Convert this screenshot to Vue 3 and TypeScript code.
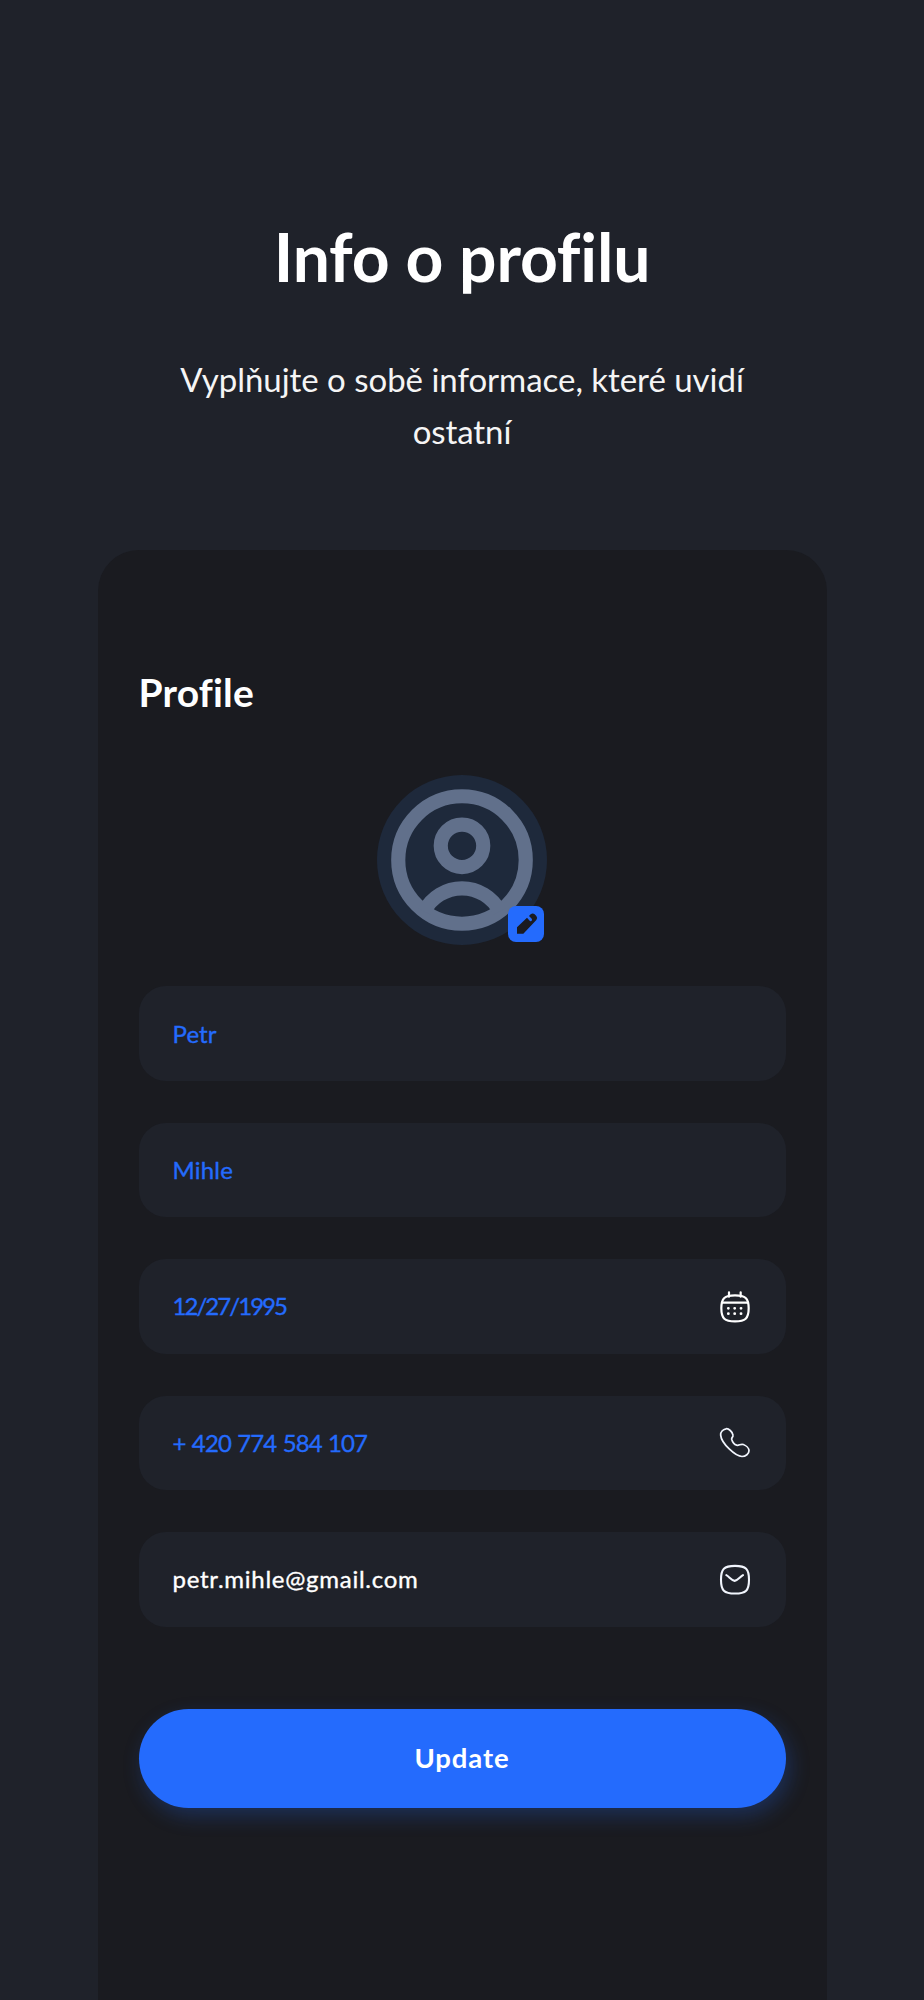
<script setup lang="ts">
interface Field {
  id: string
  value: string
  locked?: boolean
  icon?: 'calendar' | 'phone' | 'mail'
}

const fields: Field[] = [
  { id: 'first', value: 'Petr' },
  { id: 'last', value: 'Mihle' },
  { id: 'birth', value: '12/27/1995', icon: 'calendar' },
  { id: 'phone', value: '+ 420 774 584 107', icon: 'phone' },
  { id: 'email', value: 'petr.mihle@gmail.com', icon: 'mail', locked: true },
]
</script>

<template>
  <main class="page">
    <h1 class="title">Info o profilu</h1>
    <p class="subtitle">Vyplňujte o sobě informace, které uvidí <span class="tail">ostatní</span></p>

    <section class="card">
      <h2 class="heading">Profile</h2>

      <div class="avatar">
        <svg class="person" viewBox="0 0 24 24" fill="none" stroke="currentColor" stroke-width="2">
          <circle cx="12" cy="12" r="9" />
          <circle cx="12" cy="10" r="3" />
          <path d="M6.67 19.25A6 6 0 0 1 17.33 19.25" />
        </svg>
        <span class="badge">
          <svg viewBox="444 438 108 108" fill="currentColor">
            <path d="M471 521V502L501 473L509 482Q516 487 516 477L507 468L512 463Q518 458 524 463L529 468Q534 474 529 480L490 521Z" />
          </svg>
        </span>
      </div>

      <div class="fields">
        <div v-for="f in fields" :key="f.id" class="field" :class="{ locked: f.locked }">
          <span class="value" :class="f.id">{{ f.value }}</span>

          <svg v-if="f.icon === 'calendar'" class="icon" viewBox="57 57 96 105" fill="none" stroke="#fff" stroke-width="6.6" stroke-linecap="round">
            <path d="M105 76C136 76 146 84 146 115C146 146 136 154 105 154C74 154 64 146 64 115C64 84 74 76 105 76Z" />
            <path d="M66 98H144M87 67V80M122 67V80" />
            <path d="M85 115h.1M104 115h.1M123 115h.1M85 131h.1M104 131h.1M123 131h.1" stroke-width="8.5" />
          </svg>

          <svg v-else-if="f.icon === 'phone'" class="icon" viewBox="57 46.5 96 105" fill="none" stroke="#f1f5fd" stroke-width="5.2" stroke-linejoin="round">
            <path d="M78 58C85 56 98 67 99 77C100 83 94 84 95 89C97 96 104 105 110 107C117 109 122 102 130 105C138 108 147 116 147 124C147 133 137 141 126 141C107 141 64 102 62 77C61 67 69 60 78 58Z" />
          </svg>

          <svg v-else-if="f.icon === 'mail'" class="icon" viewBox="57 50.5 96 105" fill="none" stroke="#f1f5fd" stroke-width="6.3" stroke-linecap="round" stroke-linejoin="round">
            <path d="M105 62C138 62 147 71 147 103.5C147 136 138 145 105 145C72 145 63 136 63 103.5C63 71 72 62 105 62Z" />
            <path d="M79 90C87 94 95 106 104 107C113 106 120 95 129 90" />
          </svg>
        </div>
      </div>

      <button class="update" type="button"><span>Update</span></button>
    </section>
  </main>
</template>

<style>
html,
body {
  background: #1f222a;
}
</style>

<style scoped>
.page {
  box-sizing: border-box;
  width: 924px;
  height: 2000px;
  padding: 217px 97.5px 0;
  display: flex;
  flex-direction: column;
  overflow: hidden;
  background: #1f222a;
  color: #fff;
  font-family: Lato, "Liberation Sans", sans-serif;
  font-variant-ligatures: none;
}

.title {
  margin: 0;
  font-size: 66px;
  font-weight: 700;
  line-height: 80px;
  letter-spacing: -0.15px;
  text-align: center;
}

.subtitle {
  width: 600px;
  margin: 56px auto 93px;
  font-size: 33px;
  line-height: 52px;
  letter-spacing: -0.03px;
  text-align: center;
  color: #f5f5f5;
}

.tail {
  letter-spacing: -0.1px;
}

.card {
  box-sizing: border-box;
  flex: 1;
  padding: 118px 41px 0;
  border-radius: 41px 41px 0 0;
  background: #1a1b20;
}

.heading {
  margin: 0 0 59px;
  font-size: 39px;
  font-weight: 700;
  line-height: 48px;
  letter-spacing: 0.2px;
}

.avatar {
  position: relative;
  width: 170px;
  height: 170px;
  margin: 0 auto 41.4px;
  border-radius: 50%;
  background: #1e293b;
}

.person {
  display: block;
  width: 100%;
  height: 100%;
  color: #61708b;
}

.badge {
  position: absolute;
  right: 3px;
  bottom: 3px;
  width: 36px;
  height: 36px;
  border-radius: 8px;
  background: #246bfd;
  color: #1a1b20;
}

.badge svg {
  display: block;
  width: 100%;
}

.fields {
  display: flex;
  flex-direction: column;
  gap: 41.7px;
}

.field {
  box-sizing: border-box;
  display: flex;
  align-items: center;
  justify-content: space-between;
  height: 94.7px;
  padding: 0 35px 0 34px;
  border-radius: 27px;
  background: #1f222a;
  color: #246bfd;
}

.locked {
  color: #fff;
}

.value {
  padding-bottom: 1px;
  font-size: 24px;
  line-height: 29px;
  white-space: nowrap;
  -webkit-text-stroke: 0.35px currentColor;
}

.first { letter-spacing: 0.1px; }
.last { letter-spacing: 0.2px; }
.birth { letter-spacing: -1.95px; }
.phone { letter-spacing: -0.9px; word-spacing: 1.1px; }
.email { letter-spacing: 0.74px; }

.icon {
  flex: none;
  width: 32px;
  height: 35px;
}

.update {
  display: flex;
  align-items: center;
  justify-content: center;
  width: 100%;
  height: 99px;
  margin-top: 82px;
  padding: 0 0 1px;
  border: 0;
  border-radius: 50px;
  background: #246bfd;
  box-shadow: 4px 8px 20px rgba(36, 107, 253, 0.25);
  color: #fff;
  font: 700 27.5px/32px Lato, "Liberation Sans", sans-serif;
  letter-spacing: 0.9px;
}
</style>
